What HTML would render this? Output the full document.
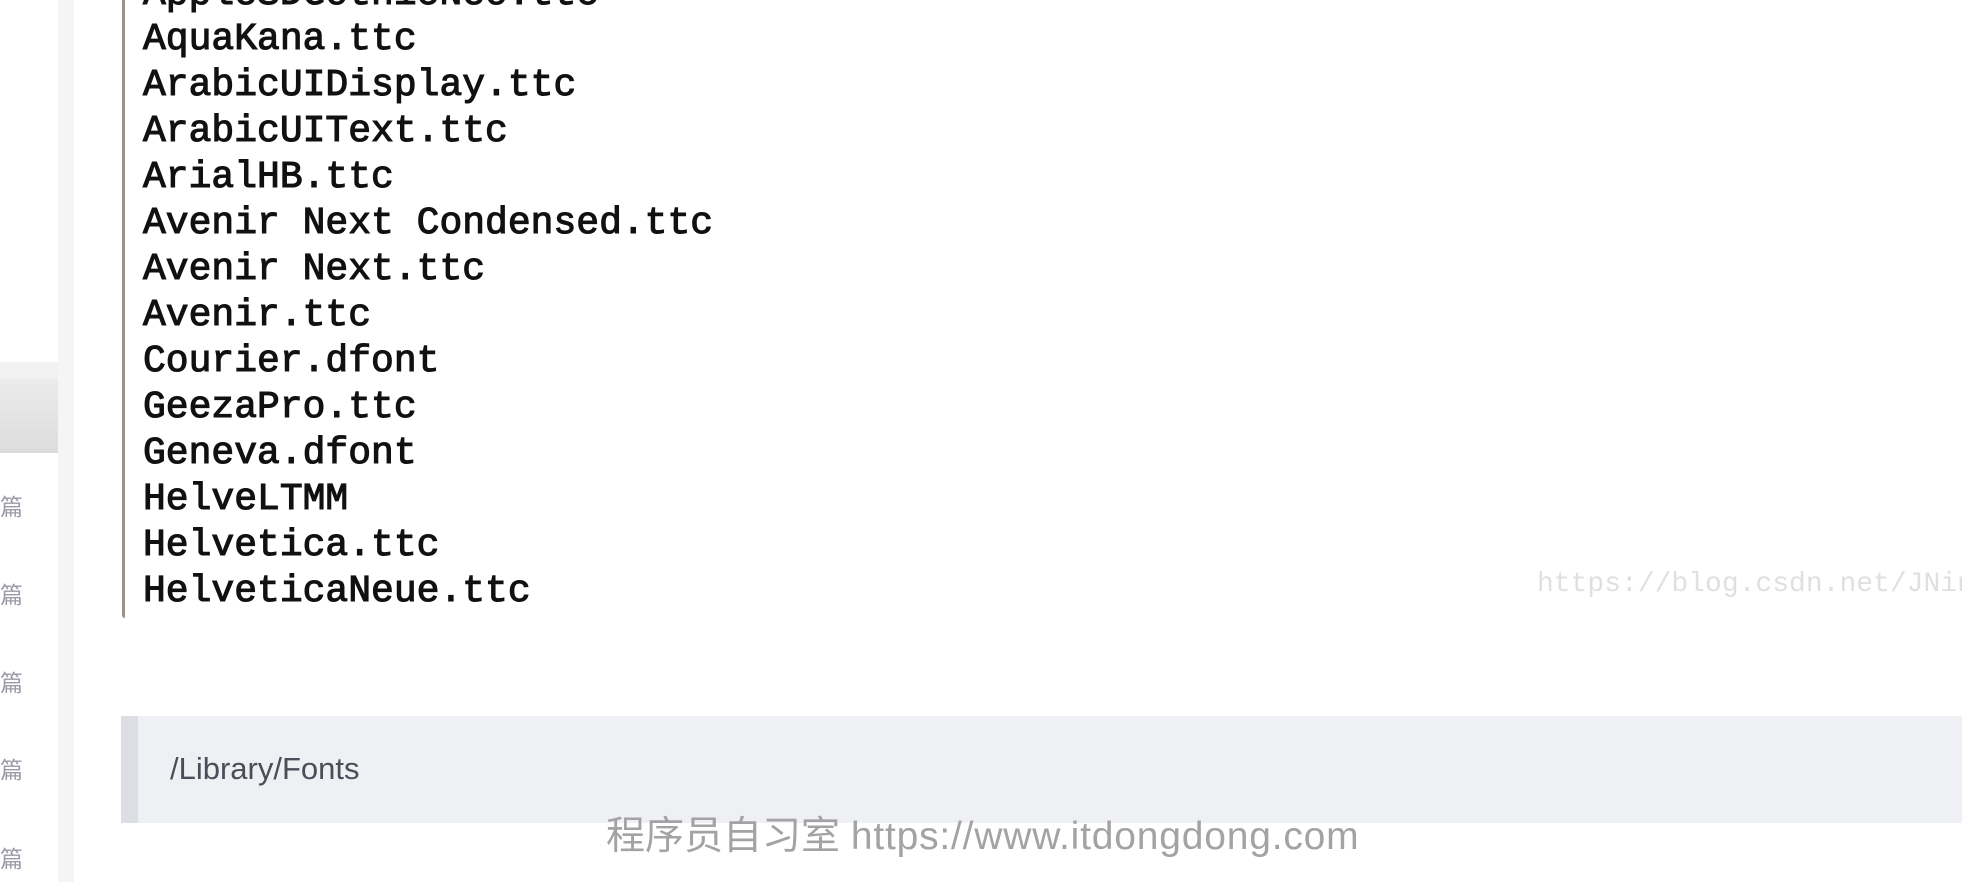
<!DOCTYPE html>
<html><head><meta charset="utf-8"><style>
html,body{margin:0;padding:0;width:1962px;height:882px;overflow:hidden;background:#fff;position:relative;font-family:"Liberation Sans","Noto Sans CJK SC",sans-serif}
.side{position:absolute;left:0;top:0;width:58px;height:882px;background:#fff}
.strip{position:absolute;left:58px;top:0;width:16px;height:882px;background:#f4f5f7}
.shade{position:absolute;left:0;top:362px;width:58px;height:16px;background:#f2f2f3}
.box{position:absolute;left:0;top:378px;width:58px;height:75px;background:linear-gradient(#ececec,#dcdcdc)}
.pian{position:absolute;left:0;font-size:23px;color:#9a9aa8;line-height:24px;font-family:"Noto Sans CJK SC",sans-serif}
.bar{position:absolute;left:122px;top:0;width:3px;height:618px;background:#9d9089;border-bottom-left-radius:3px}
.mono{position:absolute;left:143px;font-family:"Liberation Mono",monospace;font-size:38px;color:#111;line-height:46px;-webkit-text-stroke:1.1px #111;white-space:pre}
.wm{position:absolute;left:1537px;top:569px;font-family:"Liberation Mono",monospace;font-size:28px;color:#e0e0e0;white-space:pre}
.bq{position:absolute;left:121px;top:716px;width:1841px;height:107px;background:#eff0f4}
.bq:before{content:"";position:absolute;left:0;top:0;width:17px;height:107px;background:#dddee3}
.bq span{position:absolute;left:49px;top:35px;font-size:31px;color:#4d4d59;line-height:36px}
.foot{position:absolute;left:606px;top:814px;font-size:39px;color:#a3a3a3;line-height:46px;white-space:pre}
.foot .l{display:inline-block;letter-spacing:0.8px}
</style></head><body>
<div class="side"></div><div class="strip"></div><div class="shade"></div><div class="box"></div>
<div class="pian" style="top:493px">篇</div>
<div class="pian" style="top:581px">篇</div>
<div class="pian" style="top:669px">篇</div>
<div class="pian" style="top:756px">篇</div>
<div class="pian" style="top:845px">篇</div>
<div class="bar"></div>
<div class="mono" style="top:-28px">AppleSDGothicNeo.ttc</div>
<div class="mono" style="top:17px">AquaKana.ttc</div>
<div class="mono" style="top:63px">ArabicUIDisplay.ttc</div>
<div class="mono" style="top:109px">ArabicUIText.ttc</div>
<div class="mono" style="top:155px">ArialHB.ttc</div>
<div class="mono" style="top:201px">Avenir Next Condensed.ttc</div>
<div class="mono" style="top:247px">Avenir Next.ttc</div>
<div class="mono" style="top:293px">Avenir.ttc</div>
<div class="mono" style="top:339px">Courier.dfont</div>
<div class="mono" style="top:385px">GeezaPro.ttc</div>
<div class="mono" style="top:431px">Geneva.dfont</div>
<div class="mono" style="top:477px">HelveLTMM</div>
<div class="mono" style="top:523px">Helvetica.ttc</div>
<div class="mono" style="top:569px">HelveticaNeue.ttc</div>
<div class="wm">https://blog.csdn.net/JNingWei</div>
<div class="bq"><span>/Library/Fonts</span></div>
<div class="foot">程序员自习室 <span class="l">https://www.itdongdong.com</span></div>
</body></html>
